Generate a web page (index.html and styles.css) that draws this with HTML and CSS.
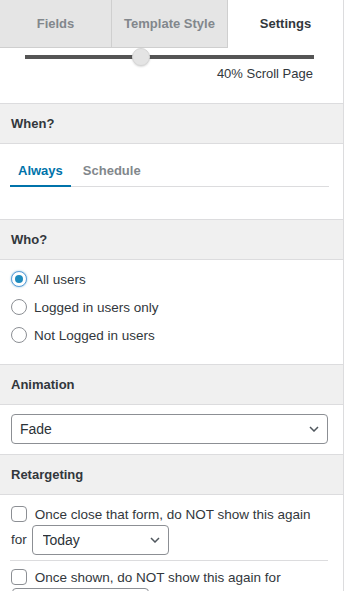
FILE: index.html
```html
<!DOCTYPE html>
<html lang="en">
<head>
    <meta charset="UTF-8">
    <meta name="viewport" content="width=device-width, initial-scale=1.0">
    <title>Settings</title>
    <link rel="stylesheet" href="styles.css">
</head>
<body>

    <div class="panel">
        <div class="tabs">
            <div class="tab">Fields</div>
            <div class="tab tab-style">Template Style</div>
            <div class="tab active">Settings</div>
        </div>

        <div class="scroll">
            <div class="track">
                <span class="thumb"></span>
            </div>
            <div class="scroll-label">40% Scroll Page</div>
        </div>

        <div class="section-head">When?</div>
        <div class="section-body when">
            <div class="nav">
                <a class="nav-link active">Always</a>
                <a class="nav-link">Schedule</a>
            </div>
        </div>

        <div class="section-head">Who?</div>
        <div class="section-body who">
            <label class="option"><input type="radio" name="who" checked> All users</label>
            <label class="option"><input type="radio" name="who"> Logged in users only</label>
            <label class="option"><input type="radio" name="who"> Not Logged in users</label>
        </div>

        <div class="section-head">Animation</div>
        <div class="section-body animation">
            <div class="select wide">
                <select><option>Fade</option></select>
                <svg class="chevron" width="10" height="6" viewBox="0 0 10 6"><path d="M1 1l4 4 4-4" fill="none" stroke="#50575e" stroke-width="1.5"/></svg>
            </div>
        </div>

        <div class="section-head">Retargeting</div>
        <div class="section-body retarget">
            <div class="rule">
                <input type="checkbox"> Once close that form, do NOT show this again for
                <span class="select small">
                    <select><option>Today</option></select>
                    <svg class="chevron" width="10" height="6" viewBox="0 0 10 6"><path d="M1 1l4 4 4-4" fill="none" stroke="#50575e" stroke-width="1.5"/></svg>
                </span>
            </div>
            <div class="rule">
                <input type="checkbox"> Once shown, do NOT show this again for
                <span class="select small">
                    <select><option>Forever</option></select>
                    <svg class="chevron" width="10" height="6" viewBox="0 0 10 6"><path d="M1 1l4 4 4-4" fill="none" stroke="#50575e" stroke-width="1.5"/></svg>
                </span>
            </div>
        </div>
    </div>

</body>
</html>
```

FILE: styles.css
```css
* {
    box-sizing: border-box;
    margin: 0;
    padding: 0;
}
body {
    font-family: "Liberation Sans", Arial, sans-serif;
    background-color: #fff;
    color: #3c434a;
    font-size: 13px;
}
.panel {
    width: 344px;
    min-height: 100vh;
    border-right: 1px solid #dcdcde;
    overflow: hidden;
}
.tabs {
    display: flex;
    height: 48px;
}
.tab {
    width: 112px;
    height: 48px;
    line-height: 47px;
    text-align: center;
    font-weight: bold;
    font-size: 13px;
    color: #82878c;
    background-color: #e5e5e5;
    border-right: 1px solid #cfcfcf;
    border-bottom: 1px solid #cfcfcf;
}
.tab-style {
    width: 116px;
}
.tab.active {
    flex: 1;
    background-color: #fff;
    color: #32373c;
    border: none;
    line-height: 48px;
}
.scroll {
    height: 55px;
    padding: 7px 29px 0 25px;
}
.track {
    position: relative;
    height: 4px;
    background-color: #555;
}
.thumb {
    position: absolute;
    left: 40%;
    top: 50%;
    width: 18px;
    height: 18px;
    margin: -9px 0 0 -9px;
    border-radius: 50%;
    background-color: #e4e4e4;
    border: 1px solid #d6d6d6;
    box-shadow: 0 1px 2px rgba(0, 0, 0, 0.15);
}
.scroll-label {
    margin-top: 7px;
    line-height: 16px;
    text-align: right;
    padding-right: 1px;
    color: #32373c;
}
.section-head {
    height: 41px;
    line-height: 39px;
    padding-left: 11px;
    font-weight: bold;
    color: #32373c;
    background-color: #f0f0f0;
    border-top: 1px solid #dcdcde;
    border-bottom: 1px solid #dcdcde;
}
.when {
    height: 75px;
    padding: 13px 14px 0 10px;
}
.nav {
    display: flex;
    border-bottom: 1px solid #dcdcde;
}
.nav-link {
    padding: 0 8px;
    margin-right: 4px;
    line-height: 28px;
    margin-bottom: -1px;
    border-bottom: 2px solid transparent;
    font-weight: bold;
    color: #82878c;
}
.nav-link.active {
    color: #0073aa;
    border-bottom-color: #0073aa;
}
.who {
    height: 104px;
    padding: 5px 11px 0;
}
.option {
    display: flex;
    align-items: center;
    height: 28px;
    font-size: 13.5px;
    color: #32373c;
}
input[type="radio"],
input[type="checkbox"] {
    appearance: none;
    -webkit-appearance: none;
    width: 16px;
    height: 16px;
    border: 1px solid #8c8f94;
    background-color: #fff;
    flex-shrink: 0;
}
input[type="radio"] {
    border-radius: 50%;
    margin-right: 7px;
    display: flex;
    align-items: center;
    justify-content: center;
}
input[type="radio"]:checked {
    border-color: #5b9dd9;
    box-shadow: 0 0 2px rgba(30, 140, 190, 0.6);
}
input[type="radio"]:checked::before {
    content: "";
    width: 8px;
    height: 8px;
    border-radius: 50%;
    background-color: #1e8cbe;
}
input[type="checkbox"] {
    border-radius: 4px;
    vertical-align: -3px;
    margin-right: 4px;
}
.animation {
    height: 49px;
    padding: 9px 15px 0 11px;
}
.select {
    position: relative;
    display: inline-block;
}
.select select {
    appearance: none;
    -webkit-appearance: none;
    width: 100%;
    height: 30px;
    padding: 0 24px 0 8px;
    border: 1px solid #8c8f94;
    border-radius: 4px;
    background-color: #fff;
    font-family: inherit;
    font-size: 14px;
    color: #2c3338;
}
.chevron {
    position: absolute;
    right: 9px;
    top: 12px;
}
.wide {
    display: block;
}
.small {
    width: 137px;
    vertical-align: middle;
    margin-left: 1px;
}
.small select {
    padding-left: 10px;
}
.retarget {
    padding: 10px 15px 0 11px;
}
.rule {
    line-height: 20px;
    font-size: 13.5px;
    color: #32373c;
    padding-bottom: 5px;
    border-bottom: 1px solid #dcdcde;
    margin-left: -1px;
    padding-left: 1px;
}
.rule + .rule {
    padding-top: 7px;
    border-bottom: none;
}
```
